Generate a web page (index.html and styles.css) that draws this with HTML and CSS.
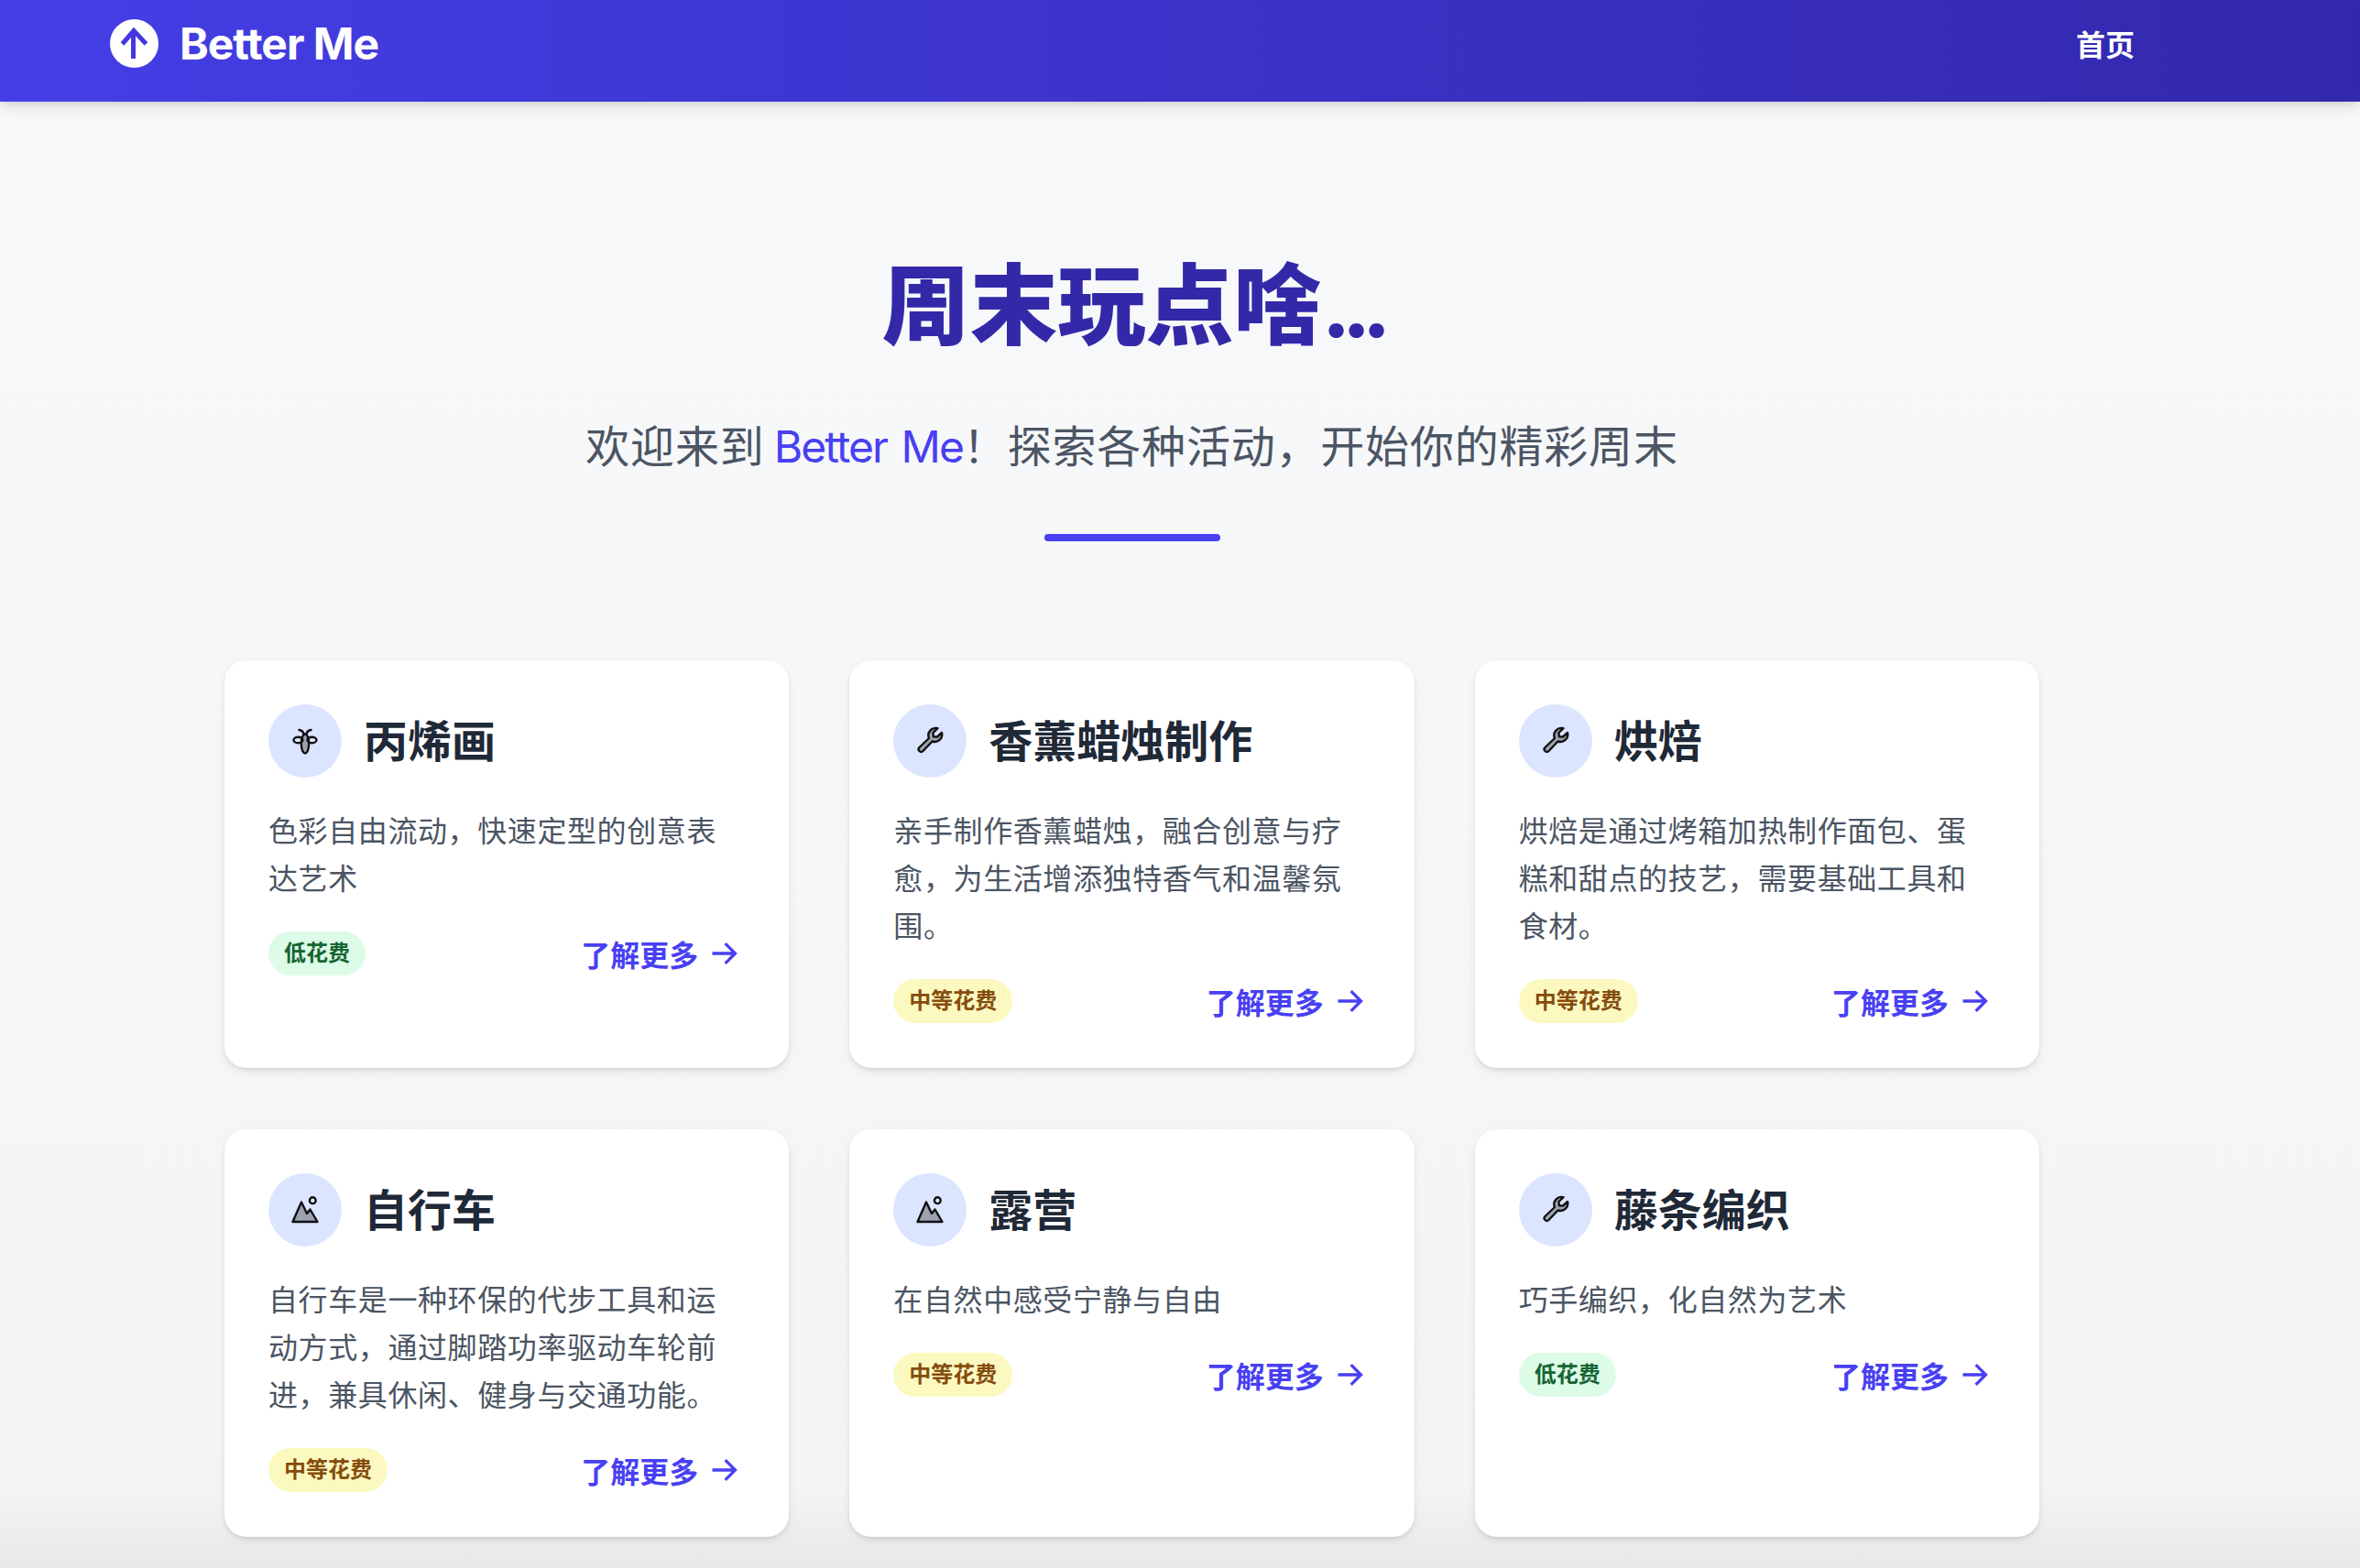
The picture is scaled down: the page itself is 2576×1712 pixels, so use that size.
FILE: index.html
```html
<!DOCTYPE html>
<html lang="zh-CN">
<head>
    <meta charset="UTF-8">
    <meta name="viewport" content="width=device-width, initial-scale=1.0">
    <link rel="stylesheet" href="styles.css">
    <title>Better Me</title>
</head>
<body>
    <nav class="navbar">
        <a class="brand" href="#">
            <svg class="brand-logo" viewBox="0 0 53 53">
                <circle cx="26.5" cy="26.5" r="26.5" fill="#fff"/>
                <path d="M13.5 27 L26 12.5 L39.5 27 M25.5 14 V43" fill="none" stroke="#4338e0" stroke-width="5"/>
            </svg>
            <span>Better Me</span>
        </a>
        <a class="nav-link" href="#">首页</a>
    </nav>

    <main class="content">
        <header class="hero">
            <h1>周末玩点啥<span class="dots">...</span></h1>
            <p>欢迎来到 <span class="accent">Better Me</span>&#xFF01;探索各种活动&#xFF0C;开始你的精彩周末</p>
            <div class="hero-bar"></div>
        </header>

        <section class="card-grid">
            <article class="card">
                <div class="card-head">
                    <div class="card-icon">
                        <svg viewBox="0 0 32 32"><use href="#icon-bug"/></svg>
                    </div>
                    <h2>丙烯画</h2>
                </div>
                <p class="card-text">色彩自由流动&#xFF0C;快速定型的创意表达艺术</p>
                <div class="card-foot">
                    <span class="badge badge-low">低花费</span>
                    <a class="more" href="#">了解更多<svg viewBox="0 0 24 24"><use href="#icon-arrow"/></svg></a>
                </div>
            </article>

            <article class="card">
                <div class="card-head">
                    <div class="card-icon">
                        <svg viewBox="0 0 32 32"><use href="#icon-wrench"/></svg>
                    </div>
                    <h2>香薰蜡烛制作</h2>
                </div>
                <p class="card-text">亲手制作香薰蜡烛&#xFF0C;融合创意与疗愈&#xFF0C;为生活增添独特香气和温馨氛围。</p>
                <div class="card-foot">
                    <span class="badge badge-mid">中等花费</span>
                    <a class="more" href="#">了解更多<svg viewBox="0 0 24 24"><use href="#icon-arrow"/></svg></a>
                </div>
            </article>

            <article class="card">
                <div class="card-head">
                    <div class="card-icon">
                        <svg viewBox="0 0 32 32"><use href="#icon-wrench"/></svg>
                    </div>
                    <h2>烘焙</h2>
                </div>
                <p class="card-text">烘焙是通过烤箱加热制作面包、蛋糕和甜点的技艺&#xFF0C;需要基础工具和食材。</p>
                <div class="card-foot">
                    <span class="badge badge-mid">中等花费</span>
                    <a class="more" href="#">了解更多<svg viewBox="0 0 24 24"><use href="#icon-arrow"/></svg></a>
                </div>
            </article>

            <article class="card">
                <div class="card-head">
                    <div class="card-icon">
                        <svg viewBox="0 0 32 32"><use href="#icon-mountain"/></svg>
                    </div>
                    <h2>自行车</h2>
                </div>
                <p class="card-text">自行车是一种环保的代步工具和运动方式&#xFF0C;通过脚踏功率驱动车轮前进&#xFF0C;兼具休闲、健身与交通功能。</p>
                <div class="card-foot">
                    <span class="badge badge-mid">中等花费</span>
                    <a class="more" href="#">了解更多<svg viewBox="0 0 24 24"><use href="#icon-arrow"/></svg></a>
                </div>
            </article>

            <article class="card">
                <div class="card-head">
                    <div class="card-icon">
                        <svg viewBox="0 0 32 32"><use href="#icon-mountain"/></svg>
                    </div>
                    <h2>露营</h2>
                </div>
                <p class="card-text">在自然中感受宁静与自由</p>
                <div class="card-foot">
                    <span class="badge badge-mid">中等花费</span>
                    <a class="more" href="#">了解更多<svg viewBox="0 0 24 24"><use href="#icon-arrow"/></svg></a>
                </div>
            </article>

            <article class="card">
                <div class="card-head">
                    <div class="card-icon">
                        <svg viewBox="0 0 32 32"><use href="#icon-wrench"/></svg>
                    </div>
                    <h2>藤条编织</h2>
                </div>
                <p class="card-text">巧手编织&#xFF0C;化自然为艺术</p>
                <div class="card-foot">
                    <span class="badge badge-low">低花费</span>
                    <a class="more" href="#">了解更多<svg viewBox="0 0 24 24"><use href="#icon-arrow"/></svg></a>
                </div>
            </article>
        </section>
    </main>

    <div class="page-edge"></div>

    <svg class="icon-defs" width="0" height="0">
        <defs>
            <g id="icon-arrow" fill="none" stroke="currentColor" stroke-width="2">
                <path d="M4.5 12 H19.5 M13 5.5 L19.5 12 L13 18.5"/>
            </g>
            <g id="icon-mountain" stroke="#111" stroke-width="2.4" stroke-linejoin="round">
                <path d="M2.5 29 L12 7.5 L18 20 L21.5 15.5 L29.5 29 Z" fill="#9ca3af"/>
                <circle cx="24.3" cy="5.7" r="3.4" fill="none"/>
            </g>
            <g id="icon-wrench" stroke="#111" stroke-width="2.4" stroke-linejoin="round">
                <path d="M24.5 2.2 L19.5 7 L19.8 11.2 L24 11.5 L29 7 A8 8 0 0 1 18.5 16.5 L8.5 27 A2.8 2.8 0 0 1 4.5 23 L15 13 A8 8 0 0 1 24.5 2.2 Z" fill="#9ca3af"/>
            </g>
            <g id="icon-bug" stroke="#111" stroke-width="2.4" stroke-linecap="round">
                <ellipse cx="16" cy="19" rx="4.2" ry="10.5" fill="#9ca3af"/>
                <ellipse cx="8.5" cy="15" rx="5" ry="3.2" fill="none"/>
                <ellipse cx="23.5" cy="15" rx="5" ry="3.2" fill="none"/>
                <path d="M9.5 4 Q13.5 4.5 14.5 8 M22.5 4 Q18.5 4.5 17.5 8" fill="none"/>
            </g>
        </defs>
    </svg>
</body>
</html>
```

FILE: styles.css
```css
html, body {
    height: 1712px;
    overflow: hidden;
}

body {
    position: relative;
    margin: 0;
    font-family: 'Inter', 'Noto Sans CJK SC', sans-serif;
    color: #1f2937;
    background: linear-gradient(to bottom, #f8f9fb, #f3f4f6);
}

a {
    text-decoration: none;
}

.navbar {
    position: relative;
    z-index: 1;
    box-sizing: border-box;
    display: flex;
    align-items: center;
    justify-content: space-between;
    height: 111px;
    padding: 0 246px 17px 120px;
    background: linear-gradient(to right, #443ee6, #3328ac);
    box-shadow: 0 10px 16px -3px rgba(0, 0, 0, 0.1), 0 4px 6px -2px rgba(0, 0, 0, 0.08);
}

.brand {
    display: flex;
    align-items: center;
    gap: 23px;
    color: #fff;
    font-size: 48px;
    font-weight: 700;
    letter-spacing: -1px;
}

.brand-logo {
    width: 53px;
    height: 53px;
}

.nav-link {
    color: #fff;
    font-size: 32px;
    font-weight: 700;
}

.content {
    position: relative;
    z-index: 1;
    width: 1981px;
    margin-left: 245px;
}

.hero {
    display: flex;
    flex-direction: column;
    align-items: center;
    padding-top: 150px;
}

.hero h1 {
    margin: 0;
    font-size: 96px;
    line-height: 144px;
    font-weight: 900;
    color: #3329a8;
}

.dots {
    font-weight: 700;
    letter-spacing: -10px;
}

.hero p {
    margin: 43px 0 0;
    font-size: 48px;
    line-height: 80px;
    letter-spacing: 0.8px;
    word-spacing: -4px;
    color: #4b5563;
}

.accent {
    color: #4840f2;
    letter-spacing: -2px;
    word-spacing: 4px;
}

.hero-bar {
    width: 192px;
    height: 8px;
    margin-top: 55px;
    border-radius: 4px;
    background: #4840f2;
}

.card-grid {
    display: grid;
    grid-template-columns: repeat(3, 1fr);
    grid-auto-rows: 445px;
    column-gap: 66px;
    row-gap: 67px;
    margin-top: 130px;
}

.card {
    box-sizing: border-box;
    padding: 48px;
    background: #fff;
    border-radius: 24px;
    box-shadow: 0 4px 10px -1px rgba(0, 0, 0, 0.1), 0 2px 4px -1px rgba(0, 0, 0, 0.08);
}

.card-head {
    display: flex;
    align-items: center;
    gap: 24px;
}

.card-icon {
    display: flex;
    align-items: center;
    justify-content: center;
    width: 80px;
    height: 80px;
    border-radius: 50%;
    background: #dbe5ff;
}

.card-icon svg {
    width: 32px;
    height: 32px;
}

.card-head h2 {
    margin: 0;
    padding-top: 2px;
    font-size: 48px;
    line-height: 64px;
    font-weight: 700;
    color: #1f2937;
}

.card-text {
    margin: 33px 0 0;
    font-size: 32px;
    line-height: 52px;
    letter-spacing: 0.6px;
    color: #4b5563;
}

.card-foot {
    display: flex;
    align-items: center;
    justify-content: space-between;
    margin-top: 31px;
    padding-right: 3px;
}

.badge {
    height: 48px;
    padding: 0 17px;
    border-radius: 24px;
    font-size: 24px;
    line-height: 48px;
    font-weight: 700;
}

.badge-low {
    background: #dcfce7;
    color: #166534;
}

.badge-mid {
    background: #fcf9c0;
    color: #854d0e;
}

.more {
    display: flex;
    align-items: center;
    gap: 8px;
    font-size: 32px;
    font-weight: 700;
    color: #4840f2;
}

.more svg {
    width: 40px;
    height: 40px;
}

.page-edge {
    position: absolute;
    left: 0;
    right: 0;
    bottom: 0;
    height: 90px;
    background: linear-gradient(to bottom, rgba(0, 0, 0, 0), rgba(0, 0, 0, 0.05));
    pointer-events: none;
}

.icon-defs {
    position: absolute;
}
```
